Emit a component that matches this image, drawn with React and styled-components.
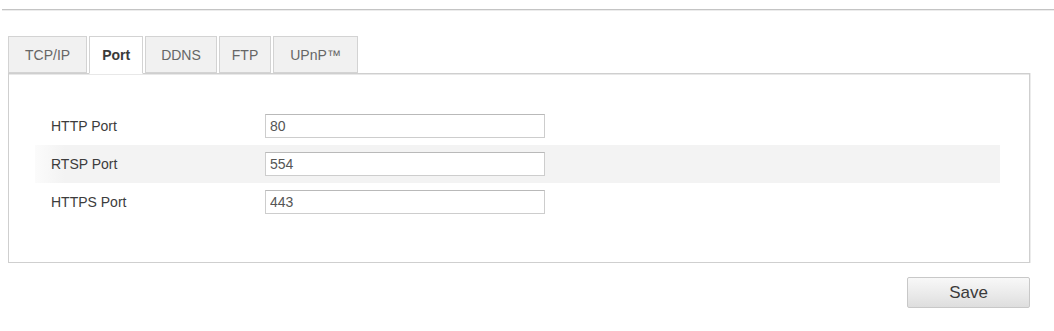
import React from "react";
import styled, { createGlobalStyle } from "styled-components";

const GlobalStyle = createGlobalStyle`
  html, body {
    margin: 0;
    padding: 0;
    background: #fff;
  }
  body {
    font-family: "Liberation Sans", Arial, sans-serif;
    color: #333;
  }
`;

const Page = styled.div`
  width: 1054px;
  height: 331px;
  padding-top: 9px;
  box-sizing: border-box;
  overflow: hidden;
`;

const TopRule = styled.div`
  margin-left: 2px;
  height: 1px;
  background: #c4c4c4;
  border-bottom: 1px solid #ececec;
`;

const Content = styled.div`
  padding: 24px 24px 0 8px;
  width: 1022px;
`;

const TabBar = styled.div`
  display: flex;
  align-items: flex-end;
  gap: 2px;
  height: 38px;
  position: relative;
  z-index: 1;
`;

const Tab = styled.div`
  box-sizing: border-box;
  padding: 0 ${({ $pad }) => $pad}px;
  display: flex;
  align-items: center;
  font-size: 14px;
  color: ${({ $active }) => ($active ? "#3a3a3a" : "#666")};
  font-weight: ${({ $active }) => ($active ? "bold" : "normal")};
  background: ${({ $active }) => ($active ? "#fff" : "#f1f1f1")};
  border: 1px solid #d3d3d3;
  border-bottom: ${({ $active }) => ($active ? "1px solid #fff" : "1px solid #d3d3d3")};
  height: ${({ $active }) => ($active ? "38px" : "37px")};
  margin-bottom: ${({ $active }) => ($active ? "-1px" : "0")};
`;

const Panel = styled.div`
  border: 1px solid #cfcfcf;
  box-shadow: inset 0 1px 0 #e8e8e8, 1px 0 0 #ececec;
  height: 190px;
  box-sizing: border-box;
  padding: 33px 29px 0 26px;
`;

const Row = styled.div`
  display: flex;
  align-items: center;
  height: 38px;
  padding-left: 16px;
  background: ${({ $shaded }) =>
    $shaded
      ? "linear-gradient(to right, #fbfbfb 0, #f3f3f3 30px, #f3f3f3 100%)"
      : "transparent"};
`;

const Label = styled.div`
  width: 214px;
  font-size: 14px;
  color: #3c3c3c;
`;

const Input = styled.input`
  width: 280px;
  height: 24px;
  box-sizing: border-box;
  border: 1px solid #cdcdcd;
  border-top-color: #b9b9b9;
  background: #fff;
  padding: 0 4px;
  font-family: "Liberation Sans", Arial, sans-serif;
  font-size: 14px;
  color: #555;
  outline: none;
`;

const Footer = styled.div`
  display: flex;
  justify-content: flex-end;
  padding-top: 14px;
`;

const SaveButton = styled.button`
  width: 123px;
  height: 31px;
  border: 1px solid #c8c8c8;
  border-radius: 2px;
  background: linear-gradient(to bottom, #f8f8f8 0%, #e9e9e9 60%, #dedede 100%);
  font-family: "Liberation Sans", Arial, sans-serif;
  font-size: 17px;
  color: #3a3a3a;
  cursor: pointer;
`;

const tabs = [
  { name: "TCP/IP", pad: 16 },
  { name: "Port", pad: 12, active: true },
  { name: "DDNS", pad: 15 },
  { name: "FTP", pad: 12 },
  { name: "UPnP™", pad: 16 },
];

const ports = [
  { label: "HTTP Port", value: "80" },
  { label: "RTSP Port", value: "554" },
  { label: "HTTPS Port", value: "443" },
];

const App = () => {
  return (
    <Page>
      <GlobalStyle />
      <TopRule />
      <Content>
        <TabBar>
          {tabs.map((t) => (
            <Tab key={t.name} $active={t.active} $pad={t.pad}>
              {t.name}
            </Tab>
          ))}
        </TabBar>
        <Panel>
          {ports.map((p, i) => (
            <Row key={p.label} $shaded={i === 1}>
              <Label>{p.label}</Label>
              <Input defaultValue={p.value} />
            </Row>
          ))}
        </Panel>
        <Footer>
          <SaveButton>Save</SaveButton>
        </Footer>
      </Content>
    </Page>
  );
};

export default App;
